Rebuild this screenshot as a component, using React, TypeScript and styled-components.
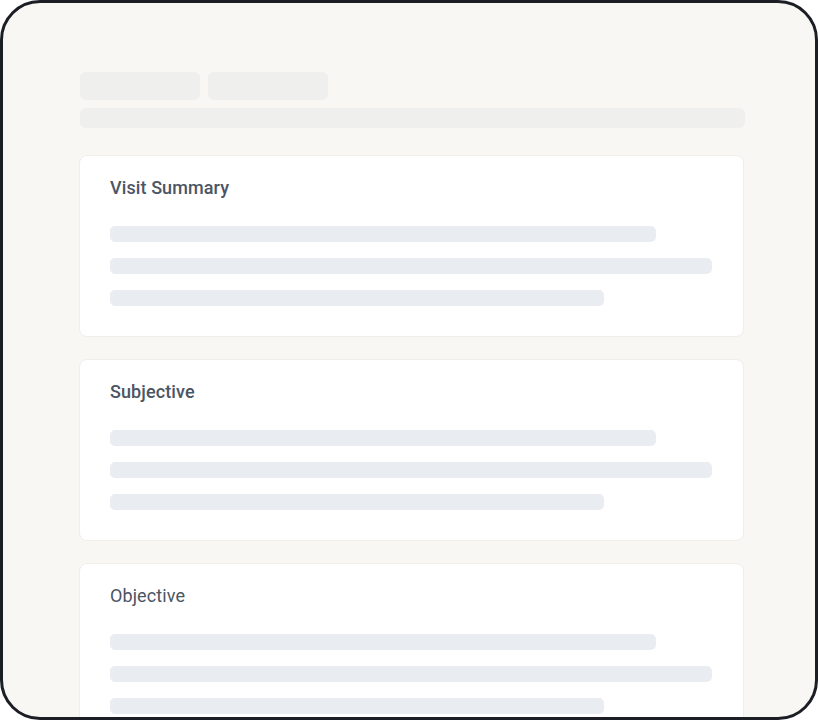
import React from "react";
import styled, { createGlobalStyle } from "styled-components";

const Global = createGlobalStyle`
  html, body { margin: 0; padding: 0; background: #ffffff; }
  * { box-sizing: border-box; }
`;

const Frame = styled.div`
  width: 818px;
  height: 720px;
  border: 3px solid #1b1e24;
  border-radius: 40px;
  background: #f8f7f4;
  overflow: hidden;
  padding: 69px 70px 0 77px;
  font-family: Roboto, "Noto Sans", sans-serif;
`;

const Header = styled.div`
  display: flex;
  flex-direction: column;
  gap: 8px;
  margin-bottom: 27px;
`;

const PillRow = styled.div`
  display: flex;
  gap: 8px;
`;

const Pill = styled.div`
  width: 120px;
  height: 28px;
  border-radius: 6px;
  background: #efefed;
`;

const WideBar = styled.div`
  height: 20px;
  border-radius: 6px;
  background: #efefed;
`;

const Cards = styled.div`
  display: flex;
  flex-direction: column;
  gap: 22px;
  margin-left: -1px;
  margin-right: 1px;
`;

const Card = styled.section`
  background: #ffffff;
  border: 1px solid #efeee9;
  border-radius: 8px;
  padding: 20px 30px 30px 30px;
`;

const Title = styled.h2<{ $weight: number }>`
  margin: 0 0 26px;
  font-size: 18px;
  line-height: 24px;
  font-weight: ${(p) => p.$weight};
  color: #4b5563;
  letter-spacing: 0.1px;
`;

const Lines = styled.div`
  display: flex;
  flex-direction: column;
  gap: 16px;
`;

const Line = styled.div<{ $w: number }>`
  width: ${(p) => p.$w}px;
  height: 16px;
  border-radius: 5px;
  background: #e9edf1;
`;

const sections = [
  { title: "Visit Summary", weight: 500 },
  { title: "Subjective", weight: 500 },
  { title: "Objective", weight: 400 },
];

export default function App() {
  return (
    <>
      <Global />
      <Frame>
        <Header>
          <PillRow>
            <Pill />
            <Pill />
          </PillRow>
          <WideBar />
        </Header>
        <Cards>
          {sections.map((s) => (
            <Card key={s.title}>
              <Title $weight={s.weight}>{s.title}</Title>
              <Lines>
                <Line $w={546} />
                <Line $w={602} />
                <Line $w={494} />
              </Lines>
            </Card>
          ))}
        </Cards>
      </Frame>
    </>
  );
}
